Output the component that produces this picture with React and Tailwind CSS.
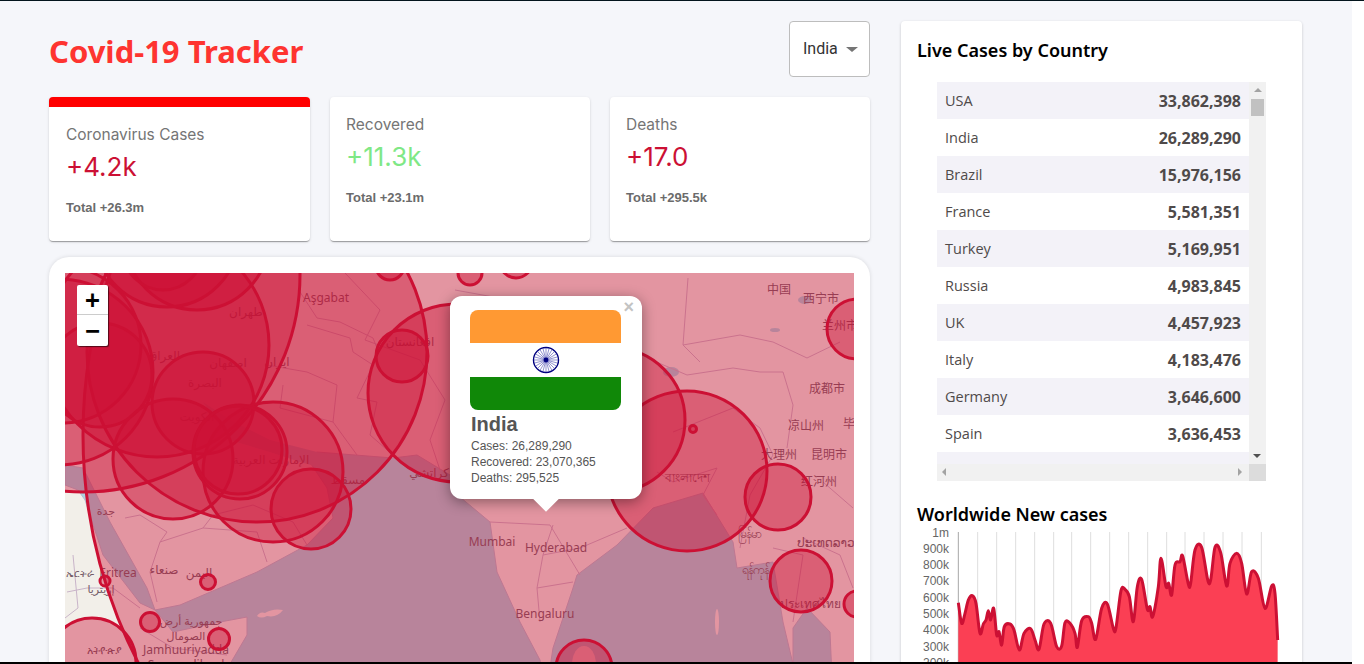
import React from "react";

const countries = [
  ["USA", "33,862,398"],
  ["India", "26,289,290"],
  ["Brazil", "15,976,156"],
  ["France", "5,581,351"],
  ["Turkey", "5,169,951"],
  ["Russia", "4,983,845"],
  ["UK", "4,457,923"],
  ["Italy", "4,183,476"],
  ["Germany", "3,646,600"],
  ["Spain", "3,636,453"],
];

// screen coordinates, the svg viewBox starts at the map corner
const circles = [
  [580, 435, 497],
  [83, 275, 217],
  [257, 352, 170],
  [157, 345, 112],
  [60, 372, 93],
  [63, 345, 78],
  [100, 375, 52],
  [197, 238, 72],
  [167, 235, 72],
  [163, 250, 40],
  [203, 403, 51],
  [173, 459, 60],
  [273, 472, 70],
  [240, 452, 47],
  [238, 450, 44],
  [311, 509, 40],
  [457, 393, 89],
  [402, 356, 26],
  [613, 420, 72],
  [687, 471, 80],
  [693, 429, 3.5],
  [778, 497, 33],
  [801, 581, 31],
  [857, 329, 30],
  [857, 604, 13],
  [584, 668, 28],
  [470, 273, 12],
  [516, 262, 16],
  [390, 266, 14],
  [208, 582, 7.5],
  [105, 581, 5],
  [150, 622, 9.5],
  [219, 639, 10.5],
  [92, 662, 44],
];

const labels = [
  ["Aşgabat", 326, 302, 12],
  ["Mumbai", 492, 546, 12],
  ["Hyderabad", 556, 552, 12],
  ["Bengaluru", 545, 618, 12],
  ["中国", 779, 294, 12],
  ["西宁市", 821, 303, 12],
  ["成都市", 827, 393, 12],
  ["凉山州", 806, 430, 12],
  ["毕", 849, 428, 12],
  ["大理州", 779, 459, 12],
  ["昆明市", 829, 459, 12],
  ["红河州", 819, 486, 12],
  ["兰州市", 840, 330, 12],
  ["Eritrea", 118, 577, 12],
  ["ኤርትራ", 80, 577, 10],
  ["إريتريا", 101, 593, 11],
  ["صنعاء", 164, 574, 12],
  ["اليمن", 199, 577, 12],
  ["جمهورية أرض", 191, 625, 11],
  ["الصومال", 186, 640, 11],
  ["Jamhuuriyadda", 186, 654, 12],
  ["Soomaaliland", 186, 669, 12],
  ["አትዮጵያ", 104, 654, 11],
  ["طهران", 246, 316, 12],
  ["اصفهان", 228, 367, 12],
  ["ایران", 277, 366, 12],
  ["العراق", 164, 360, 12],
  ["البصرة", 205, 387, 12],
  ["الكويت", 197, 421, 12],
  ["الإمارات العربية", 271, 464, 12],
  ["مسقط", 348, 484, 12],
  ["كراتشي", 429, 477, 12],
  ["افغانستان", 410, 346, 12],
  ["جدة", 106, 515, 11],
  ["বাংলাদেশ", 687, 482, 12],
  ["မြန်မာ", 749, 538, 12],
  ["ရန်ကုန်", 755, 574, 12],
  ["ປະເທດລາວ", 826, 547, 12],
  ["ประเทศไทย", 810, 608, 12],
];

const borders = [
  "M267 365 L307 372 L337 385 L333 422 L357 455",
  "M283 385 L280 408 L333 422",
  "M307 325 L350 338 L353 352 L373 365 L357 398 L377 402 L370 435 L393 455",
  "M300 292 L317 318 L340 322 L373 338 L377 348",
  "M160 542 L203 528 L257 532 L267 562",
  "M203 528 L213 515 L253 505 L293 522 L307 545",
  "M125 518 L140 515 L167 532 L160 542 L150 572 L157 602",
  "M67 592 L87 588 L113 588 L140 608",
  "M73 555 L78 608 L65 618",
  "M140 628 L173 648 L227 655",
  "M490 522 L550 525 L580 575",
  "M553 525 L543 555 L537 588 L540 622",
  "M543 555 L580 548 L627 528",
  "M537 588 L573 582",
  "M647 358 L687 375 L733 368 L760 372 L783 372 L793 405 L787 448",
  "M688 278 L683 345 L700 362",
  "M773 342 L807 358 L840 342",
  "M683 345 L740 335 L773 342",
  "M657 472 L673 482 L717 468 L703 495 L717 515",
  "M673 432 L733 408 L760 428 L773 455 L750 495 L740 548",
  "M773 548 L803 555 L793 622",
  "M803 538 L840 555 L853 588",
  "M823 482 L853 508",
  "M455 290 L510 300 L560 340 L600 390 L640 420",
  "M345 273 L380 310 L365 340 L420 360 L445 400 L430 440 L440 470",
];

const lakes = [
  [671, 372, 8, 5],
  [805, 300, 7, 4],
  [613, 340, 6, 3],
  [775, 330, 5, 2],
];

const chartTop = [
  [175, 608], [185, 670], [195, 640], [205, 600], [217, 587], [228, 610], [240, 700], [250, 672],
  [258, 660], [265, 632], [272, 660], [281, 625], [290, 705], [297, 695], [305, 735], [313, 680],
  [330, 672], [342, 690], [358, 750], [372, 700], [392, 686], [405, 720], [417, 748], [432, 672],
  [452, 670], [470, 740], [485, 738], [495, 668], [510, 670], [525, 700], [532, 742], [545, 662],
  [565, 650], [575, 670], [587, 718], [605, 625], [622, 612], [640, 685], [648, 683], [663, 572],
  [675, 568], [688, 590], [700, 665], [712, 560], [725, 538], [742, 628], [750, 620], [758, 650],
  [775, 560], [783, 475], [798, 560], [806, 550], [815, 585], [825, 495], [840, 485], [848, 468],
  [865, 552], [872, 550], [885, 450], [905, 442], [928, 552], [945, 442], [962, 458], [980, 558],
  [990, 490], [1010, 460], [1025, 490], [1040, 582], [1055, 515], [1075, 535], [1095, 625],
  [1115, 558], [1125, 580], [1133, 720],
].map(([x, y]) => [x / 3, y / 3]);

// catmull-rom through every point, so the peaks stay where they are
const smooth = (pts) => {
  let d = `M${pts[0][0]} ${pts[0][1]}`;
  for (let i = 0; i < pts.length - 1; i++) {
    const p0 = pts[Math.max(i - 1, 0)];
    const p1 = pts[i];
    const p2 = pts[i + 1];
    const p3 = pts[Math.min(i + 2, pts.length - 1)];
    const c1 = [p1[0] + (p2[0] - p0[0]) / 6, p1[1] + (p2[1] - p0[1]) / 6];
    const c2 = [p2[0] - (p3[0] - p1[0]) / 6, p2[1] - (p3[1] - p1[1]) / 6];
    d += ` C${c1[0]} ${c1[1]} ${c2[0]} ${c2[1]} ${p2[0]} ${p2[1]}`;
  }
  return d;
};

const linePath = smooth(chartTop);
const gridXs = [175, 233, 290, 347, 404, 461, 515, 572, 629, 686, 743, 800, 855, 912, 969, 1026, 1084];
const yTicks = ["1m", "900k", "800k", "700k", "600k", "500k", "400k", "300k", "200k"];

const spokes = Array.from({ length: 24 }, (_, i) => (i * Math.PI) / 12);

const InfoCard = ({ title, value, total, valueClass, active }) => (
  <div
    className={`h-[144px] bg-white rounded shadow-[0_2px_1px_-1px_rgba(0,0,0,0.2),0_1px_1px_0_rgba(0,0,0,0.14),0_1px_3px_0_rgba(0,0,0,0.12)] overflow-hidden pt-[17px] ${
      active ? "w-[261px] border-t-[10px] border-[#ff0000] pl-[17px]" : "w-[260px] pl-[16px]"
    }`}
  >
    <p className="font-['Inter',sans-serif] text-[15.5px] leading-[22px] text-[#757575]">{title}</p>
    <p className={`font-['Inter',sans-serif] text-[26px] leading-[34px] mt-[4px] ${valueClass}`}>{value}</p>
    <p className="font-['Liberation_Sans',sans-serif] text-[13px] leading-[20px] mt-[14px] font-bold text-[#6b6b6b]">{total}</p>
  </div>
);

const MapArt = () => (
  <svg className="block w-[789px] h-[428px]" viewBox="65 273 789 428">
    <rect x="65" y="273" width="789" height="428" fill="#f2efe9" />
    {/* seas */}
    <path
      d="M230 664 L247 635 L247 617 L220 622 L173 632 L155 610 L180 605 L257 572 L307 545 L333 518 L327 488 L307 458 L317 452 L393 458 L417 455 L450 475 L460 497 L490 522 L497 572 L520 622 L540 660 L545 700 L230 700 Z"
      fill="#aad3df"
      stroke="#b4bdd0"
    />
    <path
      d="M545 700 L553 648 L573 588 L577 575 L617 545 L653 508 L703 493 L733 542 L737 568 L773 562 L783 622 L793 664 L793 700 Z"
      fill="#aad3df"
      stroke="#b4bdd0"
    />
    <path d="M807 608 L830 632 L833 700 L793 700 L793 628 Z" fill="#aad3df" stroke="#b4bdd0" />
    <path d="M203 402 L230 420 L270 440 L317 452 L330 470 L300 462 L270 452 L230 440 Z" fill="#aad3df" />
    <path
      d="M65 465 L83 468 L110 522 L147 588 L155 610 L140 603 L103 555 L85 500 L78 490 L65 485 Z"
      fill="#aad3df"
      stroke="#b4bdd0"
    />
    <ellipse cx="584" cy="664" rx="12" ry="18" fill="#f2efe9" />
    <ellipse cx="717" cy="622" rx="2" ry="13" fill="#f2efe9" />
    {lakes.map(([x, y, rx, ry]) => (
      <ellipse key={`${x}-${y}`} cx={x} cy={y} rx={rx} ry={ry} fill="#aad3df" />
    ))}
    <path d="M257 616 q3 -5 8 -3 q8 -5 18 -3 q-6 8 -16 6 q-6 3 -10 0z" fill="#f2efe9" />
    {borders.map((d) => (
      <path key={d} d={d} fill="none" stroke="#c9b4c9" strokeWidth="1" />
    ))}
    {labels.map(([t, x, y, s]) => (
      <text
        key={t}
        x={x}
        y={y}
        textAnchor="middle"
        fontSize={s}
        fill="#745c68"
        fontFamily="'Noto Sans','Noto Sans CJK SC','DejaVu Sans',sans-serif"
      >
        {t}
      </text>
    ))}
    {circles.map(([x, y, r]) => (
      <circle
        key={`${x}-${y}-${r}`}
        cx={x}
        cy={y}
        r={r}
        fill="#cc1034"
        fillOpacity="0.4"
        stroke="#cc1034"
        strokeWidth="3"
      />
    ))}
  </svg>
);

const IndiaFlag = () => (
  <div className="w-[151px] h-[100px] rounded-lg overflow-hidden flex flex-col">
    <div className="h-[33px] bg-[#ff9933]" />
    <div className="h-[34px] bg-white flex items-center justify-center">
      <svg width="28" height="28" viewBox="-14 -14 28 28">
        <circle r="12.5" fill="none" stroke="#000080" strokeWidth="1.4" />
        {spokes.map((a) => (
          <line key={a} x1="0" y1="0" x2={12 * Math.cos(a)} y2={12 * Math.sin(a)} stroke="#4a4ab0" strokeWidth="0.6" />
        ))}
        <circle r="2.4" fill="#000080" />
      </svg>
    </div>
    <div className="h-[33px] bg-[#108808]" />
  </div>
);

const MapPopup = () => (
  <div className="absolute left-[385px] top-[23px] w-[192px] h-[203px] bg-white rounded-xl shadow-[0_3px_14px_rgba(0,0,0,0.4)] pl-[20px] pt-[14px] font-['Liberation_Sans',sans-serif]">
    <span className="absolute right-[8px] top-[2px] text-[#c3c3c3] text-[18px] leading-[18px] font-bold">×</span>
    <IndiaFlag />
    <p className="text-[20px] leading-[27px] font-bold text-[#555] ml-px mt-px">India</p>
    <div className="text-[12px] leading-[16px] text-[#555] ml-px">
      <p>Cases: 26,289,290</p>
      <p>Recovered: 23,070,365</p>
      <p>Deaths: 295,525</p>
    </div>
    <div className="absolute left-[83px] -bottom-[13px] w-[26px] h-[13px] overflow-hidden">
      <div className="w-[18px] h-[18px] bg-white rotate-45 mx-auto -mt-[9px]" />
    </div>
  </div>
);

const ZoomButtons = () => (
  <div className="absolute left-[12px] top-[12px] w-[31px] rounded-[2px] bg-white shadow-[1px_1px_1px_rgba(0,0,0,0.6)] font-['DejaVu_Sans_Mono',monospace] text-black">
    <div className="h-[30px] flex items-center justify-center text-[24px] font-bold border-b border-[#ccc]">+</div>
    <div className="h-[31px] flex items-center justify-center text-[24px] font-bold">−</div>
  </div>
);

const ScrollBars = () => (
  <>
    <div className="absolute right-0 top-0 w-[17px] h-[382px] bg-[#f1f1f1]">
      <div className="mx-auto mt-[6px] w-0 h-0 border-x-[4px] border-x-transparent border-b-[4px] border-b-[#a3a3a3]" />
      <div className="mx-auto mt-[7px] w-[13px] h-[17px] bg-[#c1c1c1]" />
      <div className="absolute left-[4px] bottom-[6px] w-0 h-0 border-x-[4px] border-x-transparent border-t-[4px] border-t-[#505050]" />
    </div>
    <div className="absolute left-0 bottom-0 w-[312px] h-[17px] bg-[#f1f1f1]">
      <div className="absolute left-[5px] top-[4px] w-0 h-0 border-y-[4px] border-y-transparent border-r-[4px] border-r-[#a3a3a3]" />
      <div className="absolute right-[7px] top-[4px] w-0 h-0 border-y-[4px] border-y-transparent border-l-[4px] border-l-[#a3a3a3]" />
    </div>
    <div className="absolute right-0 bottom-0 w-[17px] h-[17px] bg-[#dcdcdc]" />
  </>
);

const CountryTable = () => (
  <div className="relative ml-[20px] mt-[20px] w-[329px] h-[399px] overflow-hidden font-['Open_Sans',sans-serif] text-[#4f4a4a]">
    <div className="w-[312px]">
      {countries.map(([name, cases], i) => (
        <div
          key={name}
          className={`h-[37px] flex items-center justify-between px-[8px] pt-px ${
            i % 2 === 0 ? "bg-[#f3f2f8]" : "bg-white"
          }`}
        >
          <span className="text-[14.5px]">{name}</span>
          <span className="text-[16px] font-bold">{cases}</span>
        </div>
      ))}
      <div className="h-[37px] bg-[#f3f2f8]" />
    </div>
    <ScrollBars />
  </div>
);

const CasesChart = () => (
  <svg className="block w-[401px] h-[140px]" viewBox="0 0 401 140">
    {gridXs.map((x, i) => (
      <line
        key={x}
        x1={x / 3 - 1}
        x2={x / 3 - 1}
        y1="8"
        y2="140"
        stroke={i === 0 ? "#a8a8a8" : "#dedede"}
        strokeWidth="1"
      />
    ))}
    {yTicks.map((t, i) => (
      <text key={t} x="48" y={12.5 + i * 16.3} textAnchor="end" fontSize="12" fill="#666" fontFamily="'Liberation Sans',sans-serif">
        {t}
      </text>
    ))}
    <g transform="translate(-1 -124)">
      <path d={`${linePath} L377.6 320 L58.3 320 Z`} fill="#fb3f54" />
      <path d={linePath} fill="none" stroke="#cc1034" strokeWidth="3" strokeLinejoin="round" />
    </g>
  </svg>
);

export default function App() {
  return (
    <div className="w-[1364px] h-[664px] overflow-hidden bg-white flex flex-col">
      <div className="h-px bg-[#03141c]" />
      <div className="w-[1352px] h-[661px] overflow-hidden bg-[#f5f6fa] flex pl-[49px] pt-[20px]">
        <div className="w-[821px] shrink-0">
          <div className="flex items-center justify-between h-[56px] mb-[20px]">
            <h1 className="font-['Noto_Sans',sans-serif] font-bold text-[31px] leading-[40px] mt-[4px] text-[#fe3430]">Covid-19 Tracker</h1>
            <div className="w-[81px] h-[56px] bg-white border border-[#bdbdbd] rounded flex items-center pl-[13px] font-['Roboto',sans-serif] text-[16px] text-[#333]">
              India
              <span className="ml-[8px] w-0 h-0 border-x-[6px] border-x-transparent border-t-[5px] border-t-[#757575]" />
            </div>
          </div>
          <div className="flex gap-[20px]">
            <InfoCard active title="Coronavirus Cases" value="+4.2k" total="Total +26.3m" valueClass="text-[#cc1034]" />
            <InfoCard title="Recovered" value="+11.3k" total="Total +23.1m" valueClass="text-[#7fe886]" />
            <InfoCard title="Deaths" value="+17.0" total="Total +295.5k" valueClass="text-[#cc1034]" />
          </div>
          <div className="mt-[16px] h-[460px] bg-white rounded-[20px] shadow-[0_0_4px_rgba(0,0,0,0.12)] p-[16px]">
            <div className="relative h-[428px] overflow-hidden">
              <MapArt />
              <ZoomButtons />
              <MapPopup />
            </div>
          </div>
        </div>
        <div className="ml-[31px] w-[401px] h-[700px] shrink-0 bg-white rounded shadow-[0_1px_3px_rgba(0,0,0,0.2)] pl-[16px]">
          <h3 className="font-['Noto_Sans',sans-serif] font-semibold text-[18px] leading-[24px] mt-[17px] text-black">
            Live Cases by Country
          </h3>
          <CountryTable />
          <h3 className="font-['Noto_Sans',sans-serif] font-semibold text-[18px] leading-[24px] mt-[21px] text-black">
            Worldwide New cases
          </h3>
          <div className="-ml-[16px] mt-[-2px]">
            <CasesChart />
          </div>
        </div>
      </div>
      <div className="w-[1352px] h-[2px] bg-black" />
    </div>
  );
}
